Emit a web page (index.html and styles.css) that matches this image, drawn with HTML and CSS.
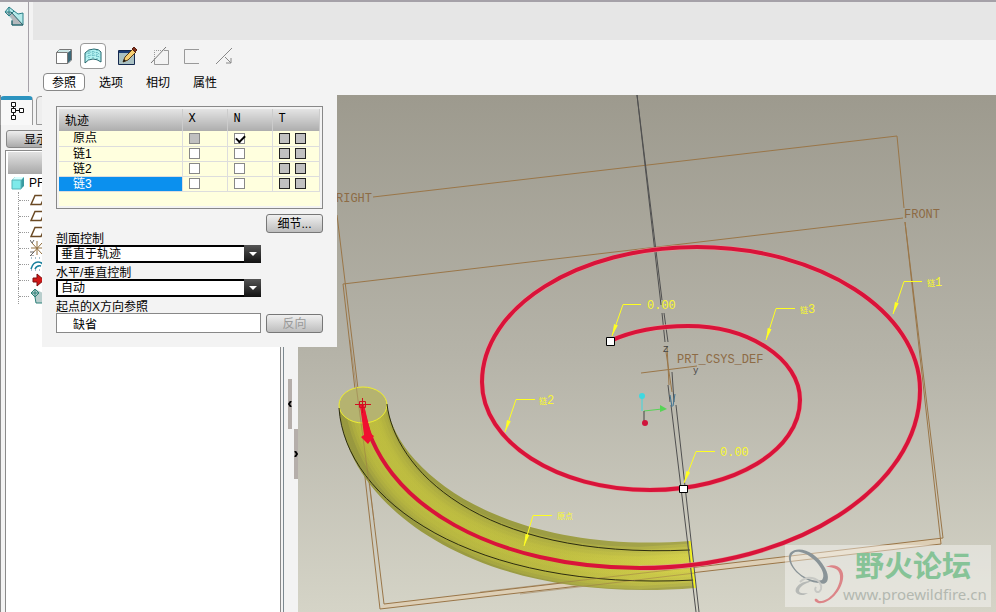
FILE: index.html
```
<!DOCTYPE html>
<html lang="zh-CN">
<head>
  <meta charset="utf-8"/>
  <title>可变剖面扫描</title>
  <link rel="stylesheet" href="styles.css">
</head>
<body>
  <header class="dashboard">
    <div class="feature-cell">
      <svg width="20" height="20" viewBox="0 0 20 20">
        <path d="M1 6 5 1 10 5 14 8 19 7V19H8V14Z" fill="#b5eaea"/>
        <path d="M2 6 7 6 19 19H8V13Z" fill="#b4b8bc"/>
        <path d="M1 6 5 1 10 5 5 10ZM10 5 14 8 19 7V19H8V14M5 1V10M1 6H7" fill="none" stroke="#2d8088"/>
        <path d="M8 15V19H19L7 6" fill="none" stroke="#2d6068"/>
      </svg>
    </div>
    <div class="dash-main">
      <div class="message-area"></div>
      <div class="toolbar">
        <div class="tool-group mode">
          <button class="tool" title="实体">
            <svg width="16" height="16" viewBox="0 0 16 16">
              <path d="M.5 4.5 3.5 1.5H15.5V12L12 15.5H.5Z" fill="#fff" stroke="#777"/>
              <path d="M12 4.5 15 2V12L12 15Z" fill="#3c6878"/>
              <path d="M.5 4.5H11.5V15.5H.5Z" fill="#fff" stroke="#777"/>
              <path d="M2 3H13" stroke="#9cc"/>
            </svg>
          </button>
          <button class="tool active" title="曲面">
            <svg width="18" height="16" viewBox="0 0 18 16">
              <path d="M1 15V5Q4 1 10 1 15 1 17 4V14Q13 11 9 11 4 11 1 15Z" fill="#b4f2f1" stroke="#27666c"/>
              <path d="M1 7Q8 1 17 7M1 10Q8 4 17 10M5 3V12M9 1V11M13 2V11" fill="none" stroke="#4fa9b2" stroke-dasharray="1 1"/>
            </svg>
          </button>
        </div>
        <div class="tool-group">
          <button class="tool" title="草绘">
            <svg width="20" height="20" viewBox="0 0 20 20">
              <path d="M.5 4.5H16.5V18.5H.5Z" fill="#a9c0c2" stroke="#14284e"/>
              <path d="M1 5H16V7H1Z" fill="#1a3c76"/>
              <path d="M5 16 7 11 15 3 18 6 10 14Z" fill="#f6cf73" stroke="#5b3a12"/>
              <path d="M14 3 16 1 19 4 17 6Z" fill="#7d2f1c" stroke="#5b2010"/>
              <path d="M5 16 6 13 8 15Z" fill="#111"/>
            </svg>
          </button>
          <button class="tool" title="移除材料" disabled>
            <svg width="20" height="20" viewBox="0 0 20 20">
              <path d="M14 4.5H18.5V18.5H4.5V14" fill="none" stroke="#999"/>
              <path d="M4.5 13V4.5H13" fill="none" stroke="#999" stroke-dasharray="1 1"/>
              <path d="M1 17 16 1" stroke="#777"/>
            </svg>
          </button>
          <button class="tool" title="薄板" disabled>
            <svg width="18" height="18" viewBox="0 0 18 18">
              <path d="M16 2.5H1.5V16.5H16" fill="none" stroke="#999"/>
            </svg>
          </button>
          <button class="tool" title="反向" disabled>
            <svg width="18" height="18" viewBox="0 0 18 18">
              <path d="M1 17 17 1" stroke="#888"/>
              <path d="M10 10 16 16M16 11V16H11" fill="none" stroke="#888"/>
            </svg>
          </button>
        </div>
      </div>
      <nav class="slide-tabs">
        <button class="slide-tab selected">参照</button>
        <button class="slide-tab">选项</button>
        <button class="slide-tab">相切</button>
        <button class="slide-tab">属性</button>
      </nav>
    </div>
  </header>

  <main class="workspace">
    <aside class="sidebar">
      <div class="nav-tabs">
        <button class="nav-tab current" title="模型树">
          <svg width="14" height="20" viewBox="0 0 14 20" fill="#fff" stroke="#111">
            <path d="M3.500 3V17M3 9.500H10"/>
            <path d="M1.500 1.500H5.500V5.500H1.500ZM1.500 7.500H5.500V11.500H1.500ZM1.500 14.500H5.500V18.500H1.500ZM9.500 7.500H13.500V11.500H9.500Z"/>
          </svg>
        </button>
        <button class="nav-tab" title="文件夹"></button>
      </div>
      <button class="show-btn">显示</button>
      <div class="tree">
        <div class="tree-head"></div>
        <div class="tree-root">
          <svg width="14" height="14" viewBox="0 0 14 14">
            <path d="M1 4 4 1H13V10L10 13H1Z" fill="#3a9aa0"/>
            <path d="M1 4 4 1H13L10 4Z" fill="#d9ffff"/>
            <path d="M1 4H10V13H1Z" fill="#7eeaea" stroke="#57b4b8"/>
          </svg>
          <span>PF</span>
        </div>
        <ul class="tree-list">
          <li><svg width="14" height="14" viewBox="0 0 14 14"><path d="M1 11.500 5 2.500H15L11 11.500Z" fill="none" stroke="#6b4a24" stroke-width="1.500"/></svg></li>
          <li><svg width="14" height="14" viewBox="0 0 14 14"><path d="M1 11.500 5 2.500H15L11 11.500Z" fill="none" stroke="#6b4a24" stroke-width="1.500"/></svg></li>
          <li><svg width="14" height="14" viewBox="0 0 14 14"><path d="M1 11.500 5 2.500H15L11 11.500Z" fill="none" stroke="#6b4a24" stroke-width="1.500"/></svg></li>
          <li><svg width="14" height="16" viewBox="0 0 14 16"><path d="M7 1V15M1 8H14M2 14 12 3M2 3 12 14" stroke="#93703f"/><path d="M0 0 2 3 4 0M0 12H4L0 16H4" fill="none" stroke="#666"/></svg></li>
          <li><svg width="14" height="14" viewBox="0 0 14 14"><path d="M1 12Q3 5 8 5 12 5 14 9M5 12Q7 8 11 9" fill="none" stroke="#177f9c" stroke-width="1.500"/><path d="M1 1H14M1 13H14" stroke="#4b7f95" stroke-dasharray="1 3"/></svg></li>
          <li><svg width="14" height="14" viewBox="0 0 14 14"><path d="M3 5H7V1L14 7 7 13V9H3Z" fill="#d01818" stroke="#7c0c0c"/></svg></li>
          <li><svg width="14" height="16" viewBox="0 0 14 16"><path d="M1 5 5 1 13 5V15H6L5 9Z" fill="#b8cecd"/><path d="M1 5 5 1 9 5 5 9ZM5 1V9M1 5H9M5 9 6 15H12" fill="none" stroke="#2d8078"/></svg></li>
        </ul>
      </div>
    </aside>

    <div class="splitter">
      <button class="grip" title="收起"><svg width="4" height="6" viewBox="0 0 4 6"><path d="M3 0 1 3 3 6" fill="none" stroke="#000" stroke-width="2"/></svg></button>
      <button class="grip right" title="展开"><svg width="4" height="6" viewBox="0 0 4 6"><path d="M1 0 3 3 1 6" fill="none" stroke="#000" stroke-width="2"/></svg></button>
    </div>

    <!-- model view -->
    <section class="viewport">
      <svg class="scene" viewBox="298 95 698 517" preserveAspectRatio="xMinYMin slice">
        <defs>
          <linearGradient id="body" x1="338" x2="696" y1="0" y2="0" gradientUnits="userSpaceOnUse">
            <stop offset="0" stop-color="#98983f"/>
            <stop offset=".5" stop-color="#9b9c42"/>
            <stop offset="1" stop-color="#a6a54c"/>
          </linearGradient>
          <linearGradient id="glow" x1="338" x2="696" y1="0" y2="0" gradientUnits="userSpaceOnUse">
            <stop offset="0" stop-color="#c2c140"/>
            <stop offset=".6" stop-color="#c4c240"/>
            <stop offset="1" stop-color="#dcd84a"/>
          </linearGradient>
          <clipPath id="tubeClip">
            <path d="M339 405C343 502 470 606 695 588L690 541C500 555 396 470 387 405Z"/>
          </clipPath>
          <marker id="arrow" viewBox="0 0 12 6" refX="12" refY="3" markerWidth="12" markerHeight="6" markerUnits="userSpaceOnUse" orient="auto">
            <path d="M0 1 12 3 0 5Z" class="arrow-head"/>
          </marker>
        </defs>

        <!-- datum planes -->
        <path class="plane-edge" d="M384 604 943 538 941 544 380 609Z"/>
        <path class="plane" d="M373 197 897 136 904 208M343 284 903 218M337 215 384 604 943 538 905 222M343 284 380 609 941 544 905 222"/>

        <!-- swept surface -->
        <g clip-path="url(#tubeClip)">
          <path d="M330 380H700V600H330Z" fill="url(#body)"/>
          <g class="tube-glow">
            <path d="M364 390C372 505 500 568 640 568L700 564" stroke-width="42"/>
            <path d="M364 390C372 505 500 568 640 568L700 564" stroke-width="36"/>
            <path d="M364 390C372 505 500 568 640 568L700 564" stroke-width="30"/>
            <path d="M364 390C372 505 500 568 640 568L700 564" stroke-width="24"/>
            <path d="M365 390C374 504 500 566 640 566L700 562" stroke-width="18"/>
            <path d="M366 390C376 504 500 565 640 565L700 561" stroke-width="10"/>
          </g>
        </g>
        <ellipse cx="363" cy="405" rx="24" ry="18" class="tube-end"/>
        <path class="tube-edge" d="M339 408C345 500 470 592 695 580M387 404C394 466 475 560 690 550"/>
        <path class="tube-rim" d="M690 541 695 588"/>
        <path class="plane faint" d="M350 340 374 520M480 592 695 567M520 594 695 573"/>

        <path class="axis" d="M637 95 661 305M637 95 662 300M662 313 665 342M664 313 668 342M668 385 670 402M672 372 674 402M671 405 696 612M676 405 699 612"/>

        <!-- trajectory -->
        <path class="spiral-halo" d="M610 341C632 331 660 326 688 326C749 326 800 359 800 400C800 450 735 490 650 490C557 490 482 442 482 382C482 307 578 247 697 247C820 247 920 312 920 390C920 488 795 568 640 568"/>
        <path class="spiral" d="M610 341C632 331 660 326 688 326C749 326 800 359 800 400C800 450 735 490 650 490C557 490 482 442 482 382C482 307 578 247 697 247C820 247 920 312 920 390C920 488 795 568 640 568C500 568 378 508 362 405"/>
        <path class="start-arrow" d="M360 405H364L371 434 374 436 368 444 361 437 364 435Z"/>
        <path class="start-cross" d="M355 404.500H371M362.500 398V413M359.500 401.500H365.500V407.500H359.500Z"/>
        <path class="handle" d="M606.500 337.500H614.500V345.500H606.500ZM679.500 485.500H687.500V492.500H679.500Z"/>

        <!-- coordinate system and spin centre -->
        <path class="plane" d="M641 373 697 366M666 352 672 392M667 346 669 385"/>
        <path class="csys-blue" d="M670 395 672 407M675 394 673 406"/>
        <text class="csys-small" x="663" y="352">Z</text>
        <text class="csys-small" x="693" y="373">y</text>
        <path d="M642 396V411" stroke="#3fd8e0"/>
        <circle cx="642" cy="396" r="3" fill="#3fd8e0"/>
        <path d="M644 411 662 409" stroke="#55d455"/>
        <path d="M660 405 667 409 660 412Z" fill="#55d455"/>
        <path d="M644 411V422" stroke="#444"/>
        <circle cx="645" cy="423" r="3" fill="#d0143c"/>

        <text class="datum" x="336" y="202">RIGHT</text>
        <text class="datum" x="904" y="218">FRONT</text>
        <text class="datum" x="677" y="363">PRT_CSYS_DEF</text>

        <g class="leader">
          <path d="M641 304.500H623L612 336"/>
          <path d="M715 451.500H696L684 483"/>
          <path d="M795 308.500H776L766 340"/>
          <path d="M922 281.500H904L893 314"/>
          <path d="M535 399.500H516L505 432"/>
          <path d="M552 515.500H533L524 546"/>
        </g>
        <g class="note">
          <text x="647" y="309">0.00</text>
          <text x="720" y="456">0.00</text>
          <text x="800" y="313"><tspan class="han">链</tspan>3</text>
          <text x="927" y="286"><tspan class="han">链</tspan>1</text>
          <text x="539" y="404"><tspan class="han">链</tspan>2</text>
          <text x="557" y="519"><tspan class="han">原点</tspan></text>
        </g>

        <!-- forum mark -->
        <g class="mark">
          <path class="mark-plate" d="M785 545H991V607H785Z"/>
          <path d="M790 553C798 545 816 551 825 568C831 579 827 586 820 583C803 583 784 564 790 553ZM791 557C789 568 808 584 822 580C828 573 814 555 800 552 795 551 792 553 791 557Z" fill="#8a9498" fill-rule="evenodd"/>
          <path d="M826 567C835 562 845 568 843 579C841 592 828 605 818 603C812 601 815 596 819 601C829 602 839 589 840 579 841 569 834 567 826 567Z" fill="#dc8588"/>
          <path d="M811 581C798 581 792 591 798 594 801 596 805 595 808 593C802 594 797 593 800 588 803 584 808 583 811 581Z" fill="#b6b9b6"/>
          <path d="M800 582C809 573 823 580 821 589 819 595 813 591 816 587" fill="none" stroke="#c7c8c4" stroke-width="2"/>
          <text class="mark-name" x="855" y="577">野火论坛</text>
          <text class="mark-url" x="843" y="600">www.proewildfire.cn</text>
        </g>
      </svg>
    </section>

    <!-- reference slide-up panel -->
    <form class="panel">
      <div class="traj-frame">
        <table class="traj">
          <colgroup>
            <col class="col-name"><col class="col-x"><col class="col-n"><col class="col-t">
          </colgroup>
          <thead>
            <tr><th class="han-head">轨迹</th><th>X</th><th>N</th><th>T</th></tr>
          </thead>
          <tbody>
            <tr>
              <td>原点</td>
              <td><input type="checkbox" aria-label="原点 X" disabled></td>
              <td><input type="checkbox" aria-label="原点 N" checked></td>
              <td><input type="checkbox" class="tan" aria-label="原点 T1" disabled><input type="checkbox" class="tan" aria-label="原点 T2" disabled></td>
            </tr>
            <tr>
              <td>链1</td>
              <td><input type="checkbox" aria-label="链1 X"></td>
              <td><input type="checkbox" aria-label="链1 N"></td>
              <td><input type="checkbox" class="tan" aria-label="链1 T1" disabled><input type="checkbox" class="tan" aria-label="链1 T2" disabled></td>
            </tr>
            <tr>
              <td>链2</td>
              <td><input type="checkbox" aria-label="链2 X"></td>
              <td><input type="checkbox" aria-label="链2 N"></td>
              <td><input type="checkbox" class="tan" aria-label="链2 T1" disabled><input type="checkbox" class="tan" aria-label="链2 T2" disabled></td>
            </tr>
            <tr class="picked">
              <td>链3</td>
              <td><input type="checkbox" aria-label="链3 X"></td>
              <td><input type="checkbox" aria-label="链3 N"></td>
              <td><input type="checkbox" class="tan" aria-label="链3 T1" disabled><input type="checkbox" class="tan" aria-label="链3 T2" disabled></td>
            </tr>
          </tbody>
        </table>
      </div>
      <div class="panel-body">
        <div class="fields">
          <label for="section">剖面控制</label>
          <div class="combo">
            <select id="section"><option>垂直于轨迹</option></select>
          </div>
          <label for="horizontal">水平/垂直控制</label>
          <div class="combo">
            <select id="horizontal"><option>自动</option></select>
          </div>
          <label for="startX">起点的X方向参照</label>
          <input class="collector" type="text" id="startX" value="缺省">
        </div>
        <div class="side-buttons">
          <button class="button" type="button">细节...</button>
          <button class="button" type="button" disabled>反向</button>
        </div>
      </div>
    </form>
  </main>
</body>
</html>
```
FILE: styles.css
```
* {
  box-sizing: border-box;
}
body {
  margin: 0;
  min-height: 100vh;
  display: flex;
  flex-direction: column;
  background: #f3f3f3;
  color: #000;
  font-family: "Liberation Sans", "Noto Sans CJK SC", sans-serif;
  font-size: 12px;
}
button, select, input {
  font: inherit;
  color: inherit;
  margin: 0;
  padding: 0;
}
button {
  display: flex;
  align-items: center;
  justify-content: center;
  border: none;
  background: none;
}
svg {
  display: block;
}

/* Dashboard */
.dashboard {
  display: flex;
  height: 95px;
  border-top: 2px solid #a5a1a8;
}
.feature-cell {
  width: 29px;
  margin-bottom: 3px;
  padding: 4px;
  border-right: 1px solid #a5a1a8;
}
.dash-main {
  flex: 1;
  padding-left: 4px;
}
.message-area {
  height: 38px;
  background: #e6e6e6;
}
.toolbar {
  display: flex;
  gap: 9px;
  padding: 3px 18px 4px;
}
.tool-group {
  display: flex;
  gap: 6px;
}
.tool-group.mode {
  gap: 3px;
}
.tool {
  width: 26px;
  height: 26px;
  border-radius: 4px;
}
.tool.active {
  background: #fff;
  border: 1px solid #999;
}
.slide-tabs {
  display: flex;
  gap: 5px;
  padding-left: 10px;
}
.slide-tab {
  width: 42px;
  height: 18px;
  padding-bottom: 2px;
  border-radius: 4px;
}
.slide-tab.selected {
  background: #fff;
  border: 1px solid #888;
}

/* Navigator */
.workspace {
  position: relative;
  flex: 1;
  display: flex;
}
.sidebar {
  width: 284px;
  display: flex;
  flex-direction: column;
  border-left: 1px solid #8a8a8a;
  border-right: 1px solid #7d8990;
  padding: 0 2px 0 4px;
}
.nav-tabs {
  display: flex;
  gap: 3px;
  margin: 1px 0 5px -5px;
}
.nav-tab {
  width: 33px;
  height: 29px;
  padding-bottom: 3px;
  border: 1px solid #999;
  border-radius: 4px 4px 0 0;
  background: #eee;
}
.nav-tab.current {
  background: #f8f8f8;
  border-top: 4px solid #2c93bf;
  border-bottom: none;
}
.show-btn {
  width: 90px;
  height: 18px;
  margin: 0 0 2px 1px;
  padding: 0 0 2px 17px;
  justify-content: flex-start;
  border: 1px solid #888;
  border-radius: 3px;
  background: linear-gradient(#eee, #aaa);
}
.tree {
  flex: 1;
  padding: 1px 2px;
  background: #fff;
  border: 1px solid #8a8a8a;
  border-bottom: none;
}
.tree-head {
  height: 22px;
  background: linear-gradient(#e2e2e2, #a8a8a8);
}
.tree-root {
  display: flex;
  align-items: center;
  gap: 4px;
  height: 18px;
  margin-left: 3px;
}
.tree-list {
  list-style: none;
  margin: 0 0 0 10px;
  padding: 0;
}
.tree-list li {
  display: flex;
  align-items: center;
  height: 16px;
  border-left: 1px dotted #999;
}
.tree-list li::before {
  content: "";
  width: 10px;
  margin-right: 1px;
  border-top: 1px dotted #999;
}

.splitter {
  width: 14px;
  padding: 284px 0 0 4px;
}
.grip {
  width: 4px;
  height: 50px;
  background: #b5aeaa;
}
.grip.right {
  margin-left: 6px;
}

/* Model view */
.viewport {
  position: relative;
  flex: 1;
  min-width: 0;
  background: linear-gradient(#9d9a8e, #b5b3a8 50%, #d5d4c7);
}
.scene {
  position: absolute;
  width: 100%;
  height: 100%;
}
.plane {
  fill: none;
  stroke: #9a7648;
}
.plane.faint {
  opacity: .5;
}
.plane-edge {
  fill: #ddcfb6;
}
.axis {
  fill: none;
  stroke: #505050;
}
.tube-glow {
  fill: none;
  stroke: url(#glow);
  stroke-opacity: .3;
}
.tube-end {
  fill: #b5b370;
  stroke: #eeee30;
}
.tube-edge {
  fill: none;
  stroke: #2c2c10;
}
.tube-rim {
  stroke: #f4f420;
  stroke-width: 2;
}
.spiral, .spiral-halo {
  fill: none;
  stroke: #d9133a;
  stroke-width: 4;
}
.spiral-halo {
  stroke: #e39a96;
  stroke-width: 5;
}
.start-arrow {
  fill: #f01030;
}
.start-cross {
  fill: none;
  stroke: #d01020;
}
.handle {
  fill: #fff;
  stroke: #000;
}
.csys-blue {
  stroke: #3c7394;
}
.datum {
  font: 12px "Liberation Mono", monospace;
  fill: #8d6b45;
}
.csys-small {
  font: 9px "Liberation Mono", monospace;
  fill: #444;
}
.leader path {
  fill: none;
  stroke: #ffff20;
  marker-end: url(#arrow);
}
.arrow-head {
  fill: #ffff20;
}
.note {
  font: 12px "Liberation Mono", "Noto Sans CJK SC", monospace;
  fill: #f8f830;
}
.note .han {
  font-size: 8px;
}
.mark-plate {
  fill: #fff;
  fill-opacity: .4;
}
.mark-name {
  font: bold 29px "Noto Sans CJK SC", sans-serif;
  fill: #86c397;
}
.mark-url {
  font: 15px "Noto Sans", sans-serif;
  fill: #b3b8b0;
}

/* References panel */
.panel {
  position: absolute;
  left: 42px;
  top: 0;
  width: 295px;
  padding: 11px 14px 14px;
  background: #f3f3f3;
}
.traj-frame {
  height: 103px;
  padding: 2px;
  border: 1px solid #888;
  background: #ffffde content-box;
}
.traj {
  width: 100%;
  table-layout: fixed;
  border-collapse: collapse;
  line-height: 14px;
}
.col-name {
  width: 123px;
}
.col-x, .col-n {
  width: 45px;
}
.traj th {
  height: 22px;
  padding: 0 6px 2px;
  text-align: left;
  font: 12px "Liberation Mono", monospace;
  background: linear-gradient(#e4e4e4, #adadad);
  border-right: 1px solid #ccc;
}
.traj .han-head {
  font-family: "Noto Sans CJK SC", sans-serif;
}
.traj td {
  height: 15px;
  padding: 0 6px;
  border-right: 1px solid #ddd;
  border-bottom: 1px solid #ddd;
}
.traj td:first-child {
  padding-left: 14px;
}
.traj .picked td:first-child {
  background: #0b90ee;
  color: #fff;
}
.traj input {
  appearance: none;
  display: block;
  float: left;
  width: 11px;
  height: 11px;
  margin-right: 5px;
  border: 1px solid #888;
  background: #fff;
}
.traj input:disabled {
  background: #c0c0c0;
}
.traj input.tan {
  border-color: #222;
}
.traj input:checked::before {
  content: "";
  display: block;
  width: 7px;
  height: 4px;
  margin: 1px;
  border: solid #000;
  border-width: 0 0 2px 2px;
  transform: rotate(-45deg);
}

.panel-body {
  display: flex;
  gap: 5px;
  padding-top: 5px;
}
.fields {
  flex: 1;
  padding-top: 15px;
}
.fields label {
  display: block;
  height: 16px;
  line-height: 20px;
}
.combo {
  position: relative;
}
.combo select {
  display: block;
  width: 100%;
  height: 18px;
  padding-left: 4px;
  appearance: none;
  border: 1px solid #000;
  outline: 1px solid #000;
  outline-offset: -2px;
  border-radius: 0;
  background: #fff;
}
.combo::before {
  content: "";
  position: absolute;
  right: 0;
  top: 0;
  width: 17px;
  height: 100%;
  background: linear-gradient(#555, #111);
  pointer-events: none;
}
.combo::after {
  content: "";
  position: absolute;
  right: 4px;
  top: 7px;
  border: 4px solid transparent;
  border-top-color: #fff;
  pointer-events: none;
}
.collector {
  display: block;
  width: 100%;
  height: 20px;
  padding-left: 16px;
  border: 1px solid #888;
  background: #fff;
}
.side-buttons {
  display: flex;
  flex-direction: column;
  justify-content: space-between;
}
.button {
  width: 57px;
  height: 19px;
  padding-bottom: 2px;
  border: 1px solid #777;
  border-radius: 3px;
  background: linear-gradient(#f0f0f0, #bdbdbd);
}
.button:disabled {
  color: #999;
}
```
